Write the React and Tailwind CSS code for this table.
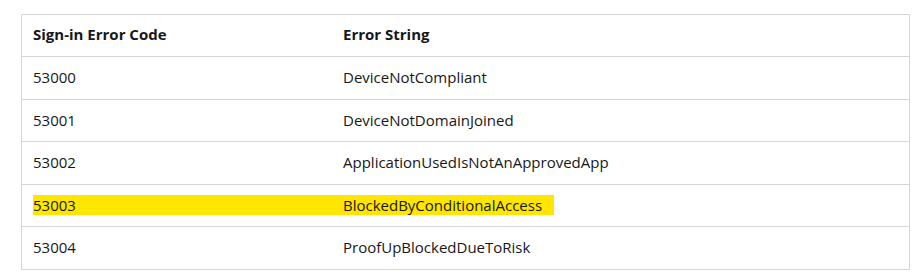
import React from 'react';

const rows = [
  { code: '53000', text: 'DeviceNotCompliant' },
  { code: '53001', text: 'DeviceNotDomainJoined' },
  { code: '53002', text: 'ApplicationUsedIsNotAnApprovedApp' },
  { code: '53003', text: 'BlockedByConditionalAccess', highlight: true },
  { code: '53004', text: 'ProofUpBlockedDueToRisk' },
];

const App = () => {
  return (
    <div className="w-[920px] h-[277px] bg-white pt-[14px] pl-[21px] font-['Segoe_UI','Open_Sans',sans-serif] text-[15px] text-[#171717]">
      <div className="w-[889px] border border-[#d6d6d6]">
        {/* Header */}
        <div className="grid grid-cols-[310px_1fr] h-[41px] pb-[2px] items-center font-bold">
          <div className="pl-[11px]">Sign-in Error Code</div>
          <div className="pl-[11px]">Error String</div>
        </div>

        {rows.map((row) => (
          <div
            key={row.code}
            className="grid grid-cols-[310px_1fr] h-[42.6px] pb-[1px] items-center border-t border-[#d6d6d6]"
          >
            {row.highlight ? (
              <>
                <div className="pl-[11px]">
                  <div className="bg-[#ffe600] h-[20px] leading-[20px]">{row.code}</div>
                </div>
                <div>
                  <div className="bg-[#ffe600] h-[20px] leading-[20px] w-[222px] pl-[11px]">{row.text}</div>
                </div>
              </>
            ) : (
              <>
                <div className="pl-[11px]">{row.code}</div>
                <div className="pl-[11px]">{row.text}</div>
              </>
            )}
          </div>
        ))}
      </div>
    </div>
  );
};

export default App;
